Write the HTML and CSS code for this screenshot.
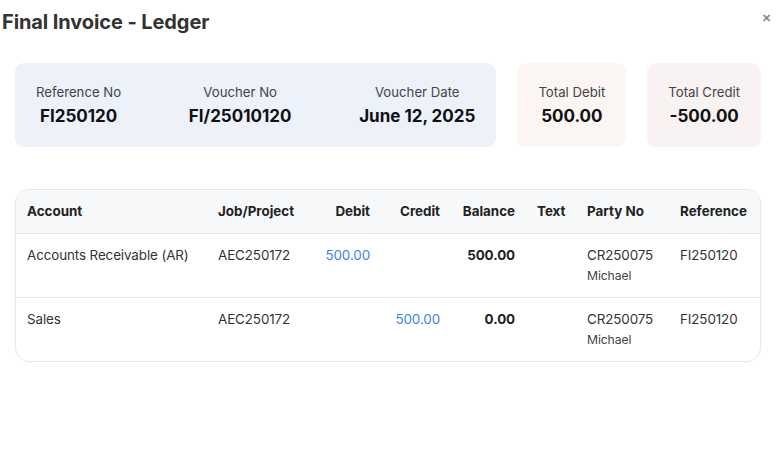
FILE: index.html
```html
<!DOCTYPE html>
<html>
<head>
<meta charset="utf-8">
<link rel="stylesheet" href="styles.css">
</head>
<body>
<div class="modal">
  <div class="header">
    <h1 class="title">Final Invoice - Ledger</h1>
    <span class="close">&#x2715;</span>
  </div>
  <div class="summary">
    <div class="card card-main">
      <div class="item"><div class="label">Reference No</div><div class="value">FI250120</div></div>
      <div class="item"><div class="label">Voucher No</div><div class="value">FI/25010120</div></div>
      <div class="item"><div class="label">Voucher Date</div><div class="value">June 12, 2025</div></div>
    </div>
    <div class="card card-debit">
      <div class="item"><div class="label">Total Debit</div><div class="value">500.00</div></div>
    </div>
    <div class="card card-credit">
      <div class="item"><div class="label">Total Credit</div><div class="value">-500.00</div></div>
    </div>
  </div>
  <div class="table-wrap">
    <table class="ledger">
      <colgroup>
        <col class="c-account"><col class="c-job"><col class="c-debit"><col class="c-credit"><col class="c-balance"><col class="c-text"><col class="c-party"><col class="c-ref">
      </colgroup>
      <thead>
        <tr>
          <th>Account</th><th>Job/Project</th><th class="num">Debit</th><th class="num">Credit</th><th class="num">Balance</th><th>Text</th><th>Party No</th><th>Reference</th>
        </tr>
      </thead>
      <tbody>
        <tr>
          <td>Accounts Receivable (AR)</td><td>AEC250172</td><td class="num blue">500.00</td><td class="num"></td><td class="num bold">500.00</td><td></td><td>CR250075<div class="sub">Michael</div></td><td>FI250120</td>
        </tr>
        <tr>
          <td>Sales</td><td>AEC250172</td><td class="num"></td><td class="num blue">500.00</td><td class="num bold">0.00</td><td></td><td>CR250075<div class="sub">Michael</div></td><td>FI250120</td>
        </tr>
      </tbody>
    </table>
  </div>
</div>
</body>
</html>
```
FILE: styles.css
```css
* { box-sizing: border-box; }
html, body { margin: 0; padding: 0; background: #fff; }
body { font-family: Inter, "Noto Sans", sans-serif; color: #222; width: 779px; height: 468px; overflow: hidden; }

.modal { padding: 0 18px 0 15px; }

.header { display: flex; justify-content: space-between; align-items: flex-start; margin-left: -13px; height: 63px; }
.title { margin: 10px 0 0 0; font-size: 20px; font-weight: 700; color: #333; letter-spacing: -0.1px; line-height: 24px; }
.close { font-size: 11px; color: #888; font-weight: 700; margin-top: 12px; margin-right: -10px; line-height: 12px; }

.summary { display: flex; gap: 21px; }
.card { height: 84px; border-radius: 9px; display: flex; align-items: center; padding: 0 21px; }
.card-main { flex: 1; justify-content: space-between; background: #edf1fa; }
.card-debit { background: #fbf6f3; }
.card-credit { background: #f8f2f2; }
.item { text-align: center; }
.label { font-size: 13.2px; color: #444; line-height: 20px; }
.value { font-size: 17px; font-weight: 700; color: #111; line-height: 24px; margin-top: 2px; }

.table-wrap { margin-top: 42px; border: 1px solid #e6e7ea; border-radius: 14px; overflow: hidden; }
.ledger { width: 100%; border-collapse: collapse; table-layout: fixed; font-size: 13.4px; }
.c-account { width: 191px; }
.c-job { width: 103px; }
.c-debit { width: 71px; }
.c-credit { width: 70px; }
.c-balance { width: 75px; }
.c-text { width: 50px; }
.c-party { width: 93px; }
.c-ref { width: 91px; }
.ledger th { background: #f7f8fa; height: 43px; padding: 0 11px; text-align: left; font-weight: 700; color: #222; font-size: 13.4px; border-bottom: 1px solid #e6e7ea; white-space: nowrap; }
.ledger td { height: 64px; padding: 11px 11px 0; vertical-align: top; line-height: 20px; color: #333; white-space: nowrap; letter-spacing: -0.1px; }
.ledger tbody tr + tr td { border-top: 1px solid #e6e7ea; }
.ledger .num { text-align: right; }
.blue { color: #3b82f0 !important; }
.bold { font-weight: 700; color: #222 !important; }
.sub { font-size: 12.2px; line-height: 21px; color: #444; }
```
